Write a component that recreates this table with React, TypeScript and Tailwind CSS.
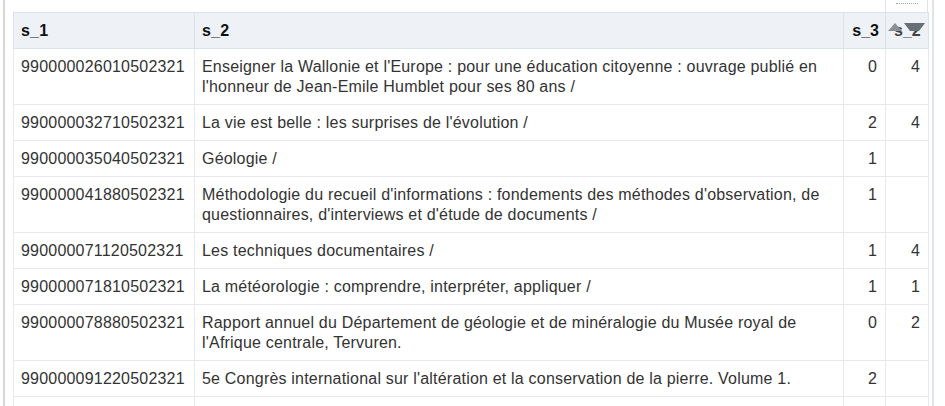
import React from "react"

const rows = [
  { id: "990000026010502321", title: "Enseigner la Wallonie et l'Europe : pour une éducation citoyenne : ouvrage publié en l'honneur de Jean-Emile Humblet pour ses 80 ans /", s3: "0", s4: "4" },
  { id: "990000032710502321", title: "La vie est belle : les surprises de l'évolution /", s3: "2", s4: "4" },
  { id: "990000035040502321", title: "Géologie /", s3: "1", s4: "" },
  { id: "990000041880502321", title: "Méthodologie du recueil d'informations : fondements des méthodes d'observation, de questionnaires, d'interviews et d'étude de documents /", s3: "1", s4: "" },
  { id: "990000071120502321", title: "Les techniques documentaires /", s3: "1", s4: "4" },
  { id: "990000071810502321", title: "La météorologie : comprendre, interpréter, appliquer /", s3: "1", s4: "1" },
  { id: "990000078880502321", title: "Rapport annuel du Département de géologie et de minéralogie du Musée royal de l'Afrique centrale, Tervuren.", s3: "0", s4: "2" },
  { id: "990000091220502321", title: "5e Congrès international sur l'altération et la conservation de la pierre. Volume 1.", s3: "2", s4: "" },
]

export default function App() {
  return (
    <div className="w-[945px] h-[406px] overflow-hidden bg-white flex text-[#333] font-['Liberation_Sans',Arial,sans-serif] text-[16px] tracking-[0.2px]">
      {/* left rule */}
      <div className="ml-[3px] w-[2px] bg-[#d6d6d6] h-full shrink-0" />

      <div className="ml-[8px] w-[915px] shrink-0">
        {/* strip above the header */}
        <div className="flex h-[12px]">
          <div className="flex-1" />
          <div className="w-[43px] border-x border-[#dde3ea] flex justify-center pt-[3px]">
            <div className="w-[22px] border-t border-dotted border-[#9aa4ae]" />
          </div>
        </div>

        <table className="table-fixed border-collapse w-[915px] leading-[20px]">
          <colgroup>
            <col className="w-[181px]" />
            <col className="w-[649px]" />
            <col className="w-[42px]" />
            <col className="w-[43px]" />
          </colgroup>
          <thead>
            <tr className="bg-[#eef2f7] h-[36px]">
              <th className="border border-[#dbe2ea] px-[7px] text-left font-bold text-[#111]">s_1</th>
              <th className="border border-[#dbe2ea] px-[7px] text-left font-bold text-[#111]">s_2</th>
              <th className="border border-[#dbe2ea] px-[6px] text-right font-bold text-[#111] tracking-normal">s_3</th>
              <th className="border border-[#dbe2ea] pl-[8px] text-left font-bold text-[#444] relative tracking-normal">
                <span>s_2</span>
                <svg className="absolute left-[2px] top-[9px]" width="40" height="16" viewBox="0 0 40 16">
                  <polygon points="0,9 7,1 14,9" fill="#8a9096" />
                  <polygon points="16,1 37,1 31,9 22,9" fill="#686e75" />
                </svg>
              </th>
            </tr>
          </thead>
          <tbody>
            {rows.map((r) => (
              <tr key={r.id}>
                <td className="border border-[#e6e9ed] px-[7px] pt-[8px] pb-[7px] align-top whitespace-nowrap">{r.id}</td>
                <td className="border border-[#e6e9ed] px-[7px] pt-[8px] pb-[7px] align-top">{r.title}</td>
                <td className="border border-[#e6e9ed] px-[8px] pt-[8px] pb-[7px] align-top text-right">{r.s3}</td>
                <td className="border border-[#e6e9ed] px-[8px] pt-[8px] pb-[7px] align-top text-right">{r.s4}</td>
              </tr>
            ))}
            {/* next row, scrolled past the bottom edge */}
            <tr className="h-[36px]">
              <td className="border border-[#e6e9ed]" />
              <td className="border border-[#e6e9ed]" />
              <td className="border border-[#e6e9ed]" />
              <td className="border border-[#e6e9ed]" />
            </tr>
          </tbody>
        </table>
      </div>

      {/* right rule */}
      <div className="ml-[4px] w-[2px] bg-[#e2e5e8] h-full shrink-0" />
    </div>
  )
}
